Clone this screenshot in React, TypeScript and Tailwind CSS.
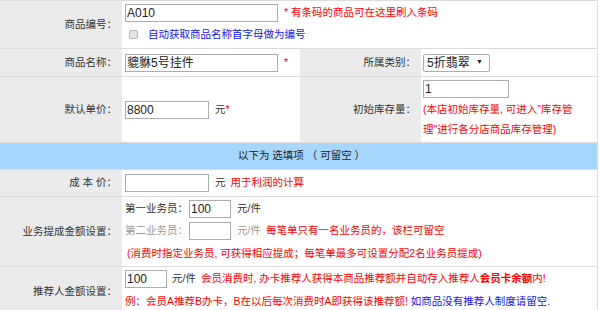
import React from "react";

const font = { fontFamily: '"Liberation Sans", "Noto Sans CJK SC", sans-serif' };

function Label({ children }: { children: React.ReactNode }) {
  return (
    <div className="w-[122px] shrink-0 bg-[#ebebeb] flex items-center justify-end pr-[5px] text-[#333] whitespace-nowrap">
      {children}
    </div>
  );
}

function Box({ w, value = "" }: { w: string; value?: string }) {
  return (
    <div
      className={`${w} h-[18px] shrink-0 border border-[#a9adb3] bg-white pl-[1px] text-[12px] leading-[16px] text-[#222]`}
    >
      {value}
    </div>
  );
}

export default function App() {
  return (
    <div style={font} className="w-[598px] text-[10.5px] bg-white border-t border-r border-[#dcdcdc] overflow-hidden whitespace-nowrap">
      {/* 商品编号 */}
      <div className="flex h-[48px] border-b border-[#dcdcdc]">
        <Label>商品编号：</Label>
        <div className="flex-1 pl-[3px] pt-[3px] flex flex-col gap-[5px]">
          <div className="flex items-center">
            <Box w="w-[153px]" value="A010" />
            <span className="text-[#ff0000] ml-[6px]">* 有条码的商品可在这里刷入条码</span>
          </div>
          <div className="flex items-center pl-[4px]">
            <span className="w-[9px] h-[9px] rounded-[2px] border border-[#b5b5b5] bg-[#e4e4e4]" />
            <span className="text-[#1414f5] ml-[10px]">自动获取商品名称首字母做为编号</span>
          </div>
        </div>
      </div>

      {/* 商品名称 / 所属类别 */}
      <div className="flex h-[28px] border-b border-[#dcdcdc]">
        <Label>商品名称：</Label>
        <div className="w-[178px] shrink-0 pl-[3px] flex items-center">
          <Box w="w-[153px]" value="貔貅5号挂件" />
          <span className="text-[#ff0000] ml-[6px]">*</span>
        </div>
        <div className="w-[121px] shrink-0 bg-[#ebebeb] flex items-center justify-end pr-[5px] text-[#333]">
          所属类别：
        </div>
        <div className="flex-1 pl-[2px] flex items-center">
          <div className="w-[67px] h-[18px] border border-[#a9adb3] rounded-[2px] bg-white flex items-center justify-between pl-[3px] pr-[6px] text-[12px] text-[#222]">
            <span>5折翡翠</span>
            <span className="text-[7px]">▼</span>
          </div>
        </div>
      </div>

      {/* 默认单价 / 初始库存量 */}
      <div className="flex h-[66px] border-b border-[#dcdcdc]">
        <Label>默认单价：</Label>
        <div className="w-[178px] shrink-0 pl-[3px] flex items-center">
          <Box w="w-[84px]" value="8800" />
          <span className="ml-[6px] text-[#333]">元</span>
          <span className="text-[#ff0000]">*</span>
        </div>
        <div className="w-[121px] shrink-0 bg-[#ebebeb] flex items-center justify-end pr-[5px] text-[#333]">
          初始库存量：
        </div>
        <div className="flex-1 pl-[2px] pt-[3px]">
          <Box w="w-[86px]" value="1" />
          <div className="text-[#ff0000] leading-[20px] pt-[1px]">
            (本店初始库存量, 可进入"库存管
            <br />
            理"进行各分店商品库存管理)
          </div>
        </div>
      </div>

      {/* 分隔 */}
      <div className="h-[27px] bg-[#a6d6fb] flex items-center justify-center text-[#222] border-b border-[#dcdcdc] pl-[6px]">
        以下为 选填项 （ 可留空 ）
      </div>

      {/* 成本价 */}
      <div className="flex h-[27px] border-b border-[#dcdcdc]">
        <Label>成 本 价：</Label>
        <div className="flex-1 pl-[3px] flex items-center">
          <Box w="w-[84px]" />
          <span className="ml-[6px] text-[#333]">元</span>
          <span className="ml-[5px] text-[#ff0000]">用于利润的计算</span>
        </div>
      </div>

      {/* 业务提成 */}
      <div className="flex h-[70px] border-b border-[#dcdcdc]">
        <Label>业务提成金额设置：</Label>
        <div className="flex-1 pl-[3px] pt-[3px] flex flex-col">
          <div className="flex items-center h-[18px]">
            <span className="text-[#333] w-[64px]">第一业务员：</span>
            <Box w="w-[42px]" value="100" />
            <span className="ml-[6px] text-[#333]">元/件</span>
          </div>
          <div className="flex items-center h-[18px] mt-[4px]">
            <span className="text-[#999] w-[64px]">第二业务员：</span>
            <Box w="w-[42px]" />
            <span className="ml-[6px] text-[#999]">元/件</span>
            <span className="ml-[5px] text-[#ff0000]">每笔单只有一名业务员的，该栏可留空</span>
          </div>
          <div className="text-[#ff0000] mt-[3px] leading-[20px] pl-[2px]">
            (消费时指定业务员, 可获得相应提成；每笔单最多可设置分配2名业务员提成)
          </div>
        </div>
      </div>

      {/* 推荐人 */}
      <div className="flex h-[50px]">
        <Label>推荐人金额设置：</Label>
        <div className="flex-1 pl-[3px] pt-[3px] flex flex-col">
          <div className="flex items-center h-[18px]">
            <Box w="w-[42px]" value="100" />
            <span className="ml-[5px] text-[#333]">元/件</span>
            <span className="ml-[5px] text-[#ff0000]">
              会员消费时, 办卡推荐人获得本商品推荐额并自动存入推荐人<b>会员卡余额</b>内!
            </span>
          </div>
          <div className="mt-[3px] leading-[20px]">
            <span className="text-[#ff0000]">例：会员A推荐B办卡，B在以后每次消费时A即获得该推荐额! </span>
            <span className="text-[#1414f5]">如商品没有推荐人制度请留空.</span>
          </div>
        </div>
      </div>
    </div>
  );
}
